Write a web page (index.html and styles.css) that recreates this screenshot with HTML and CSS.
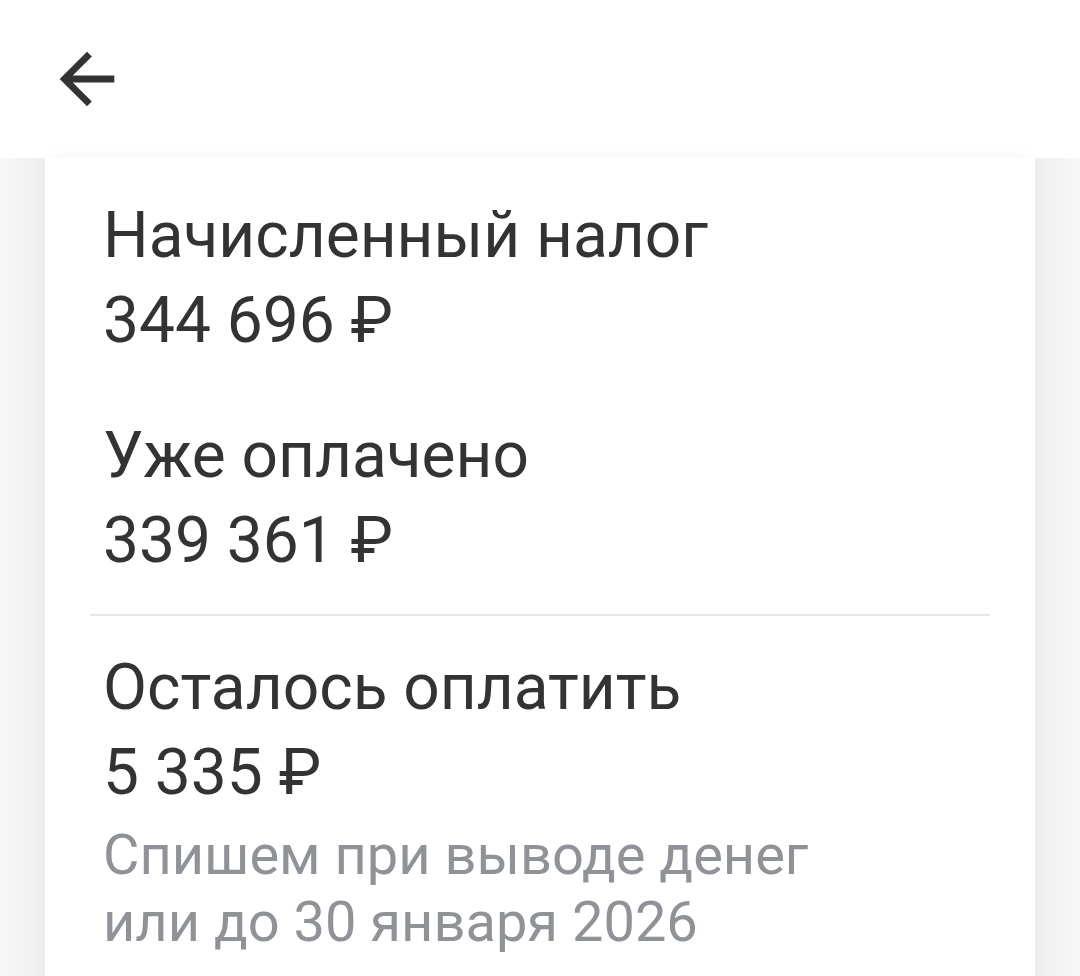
FILE: index.html
```html
<!DOCTYPE html>
<html lang="ru">
<head>
<meta charset="utf-8">
<link rel="stylesheet" href="styles.css">
</head>
<body>
<header class="topbar">
  <svg class="back" width="82" height="82" viewBox="0 0 24 24" aria-label="Назад">
    <path d="M20 11H7.83l5.59-5.59L12 4l-8 8 8 8 1.41-1.41L7.83 13H20v-2z" fill="#333333"/>
  </svg>
</header>
<main class="page">
  <section class="card">
    <div class="group">
      <div class="label">Начисленный налог</div>
      <div class="value">344 696 ₽</div>
    </div>
    <div class="group second">
      <div class="label">Уже оплачено</div>
      <div class="value">339 361 ₽</div>
    </div>
    <hr class="divider">
    <div class="group third">
      <div class="label">Осталось оплатить</div>
      <div class="value">5 335 ₽</div>
      <div class="note">Спишем при выводе денег<br>или до 30 января 2026</div>
    </div>
  </section>
</main>
</body>
</html>
```
FILE: styles.css
```css
html, body {
  margin: 0;
  padding: 0;
  height: 100%;
}
body {
  font-family: Roboto, "Noto Sans", sans-serif;
  color: #333333;
  background: #ffffff;
  display: flex;
  flex-direction: column;
  overflow: hidden;
}
.topbar {
  height: 158px;
  flex: none;
  background: #ffffff;
  display: flex;
  align-items: flex-start;
  padding: 38px 0 0 46px;
  box-sizing: border-box;
}
.back {
  display: block;
}
.page {
  flex: 1;
  background: linear-gradient(to right, #f8f8f8 0, #efefef 45px, #efefef 1035px, #f8f8f8 1080px);
  padding: 0 45px;
}
.card {
  background: #ffffff;
  height: 100%;
  padding: 35px 45px 0 58px;
  box-sizing: border-box;
  box-shadow: 0 0 18px rgba(0, 0, 0, 0.04);
}
.label, .value {
  font-size: 64px;
  line-height: 85px;
  font-weight: 400;
}
.second {
  margin-top: 50px;
}
.divider {
  border: none;
  height: 2px;
  background: #e6e6e6;
  margin: 31px 0 29px -13px;
}
.note {
  margin-top: 7px;
  font-size: 56px;
  line-height: 67px;
  color: #8f9297;
}
```
